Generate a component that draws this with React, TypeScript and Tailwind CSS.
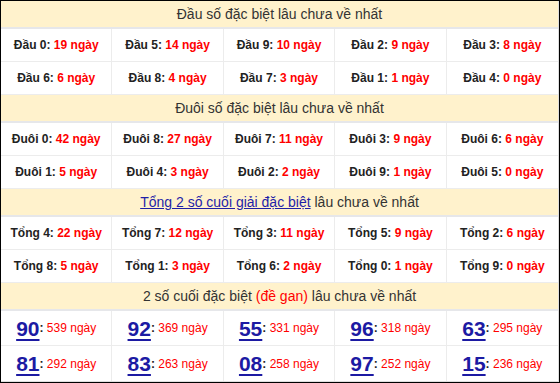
import React from "react";

const font = { fontFamily: '"Liberation Sans", Arial, sans-serif' };

type Item = [string, string];

function Header({ children }: { children: React.ReactNode }) {
  return (
    <div className="h-[28px] shrink-0 flex items-center justify-center bg-[#fff2cc] border-b-2 border-[#e6e7ea] text-[14px] text-[#333]">
      {children}
    </div>
  );
}

function Row({ items }: { items: Item[] }) {
  return (
    <div className="h-[33px] shrink-0 grid grid-cols-5 border-b border-[#ececec]">
      {items.map(([l, v], i) => (
        <div
          key={i}
          className={`flex items-center justify-center text-[12px] font-bold text-[#222] ${i < 4 ? "border-r border-[#ececec]" : ""}`}
        >
          <span>{l}:&nbsp;</span>
          <span className="text-[#ff0000]">{v} ngày</span>
        </div>
      ))}
    </div>
  );
}

function BigRow({ items, last }: { items: Item[]; last?: boolean }) {
  return (
    <div className={`grid grid-cols-5 ${last ? "flex-1" : "h-[35px] shrink-0 border-b border-[#ececec]"}`}>
      {items.map(([n, v], i) => (
        <div
          key={i}
          className={`flex items-center justify-center ${i < 4 ? "border-r border-[#ececec]" : ""}`}
        >
          <span className="text-[21px] font-bold text-[#1c1aa3] underline decoration-2 underline-offset-[3px] leading-none">
            {n}
          </span>
          <span className="text-[12px] font-bold text-[#222]">:&nbsp;</span>
          <span className="text-[12px] text-[#ff0000]">{v} ngày</span>
        </div>
      ))}
    </div>
  );
}

export default function App() {
  return (
    <div style={font} className="w-[560px] h-[383px] bg-white">
      <div className="w-[560px] h-[383px] border border-black flex flex-col">
        <div className="flex-1 flex flex-col border-r border-b border-[#dedede]">
          <Header>Đầu số đặc biệt lâu chưa về nhất</Header>
          <Row
            items={[
              ["Đầu 0", "19"],
              ["Đầu 5", "14"],
              ["Đầu 9", "10"],
              ["Đầu 2", "9"],
              ["Đầu 3", "8"],
            ]}
          />
          <Row
            items={[
              ["Đầu 6", "6"],
              ["Đầu 8", "4"],
              ["Đầu 7", "3"],
              ["Đầu 1", "1"],
              ["Đầu 4", "0"],
            ]}
          />
          <Header>Đuôi số đặc biệt lâu chưa về nhất</Header>
          <Row
            items={[
              ["Đuôi 0", "42"],
              ["Đuôi 8", "27"],
              ["Đuôi 7", "11"],
              ["Đuôi 3", "9"],
              ["Đuôi 6", "6"],
            ]}
          />
          <Row
            items={[
              ["Đuôi 1", "5"],
              ["Đuôi 4", "3"],
              ["Đuôi 2", "2"],
              ["Đuôi 9", "1"],
              ["Đuôi 5", "0"],
            ]}
          />
          <Header>
            <span className="text-[#1f1fa8] underline">Tổng 2 số cuối giải đặc biệt</span>
            <span>&nbsp;lâu chưa về nhất</span>
          </Header>
          <Row
            items={[
              ["Tổng 4", "22"],
              ["Tổng 7", "12"],
              ["Tổng 3", "11"],
              ["Tổng 5", "9"],
              ["Tổng 2", "6"],
            ]}
          />
          <Row
            items={[
              ["Tổng 8", "5"],
              ["Tổng 1", "3"],
              ["Tổng 6", "2"],
              ["Tổng 0", "1"],
              ["Tổng 9", "0"],
            ]}
          />
          <Header>
            <span>2 số cuối đặc biệt&nbsp;</span>
            <span className="text-[#ff0000]">(đề gan)</span>
            <span>&nbsp;lâu chưa về nhất</span>
          </Header>
          <BigRow
            items={[
              ["90", "539"],
              ["92", "369"],
              ["55", "331"],
              ["96", "318"],
              ["63", "295"],
            ]}
          />
          <BigRow
            last
            items={[
              ["81", "292"],
              ["83", "263"],
              ["08", "258"],
              ["97", "252"],
              ["15", "236"],
            ]}
          />
        </div>
      </div>
    </div>
  );
}
